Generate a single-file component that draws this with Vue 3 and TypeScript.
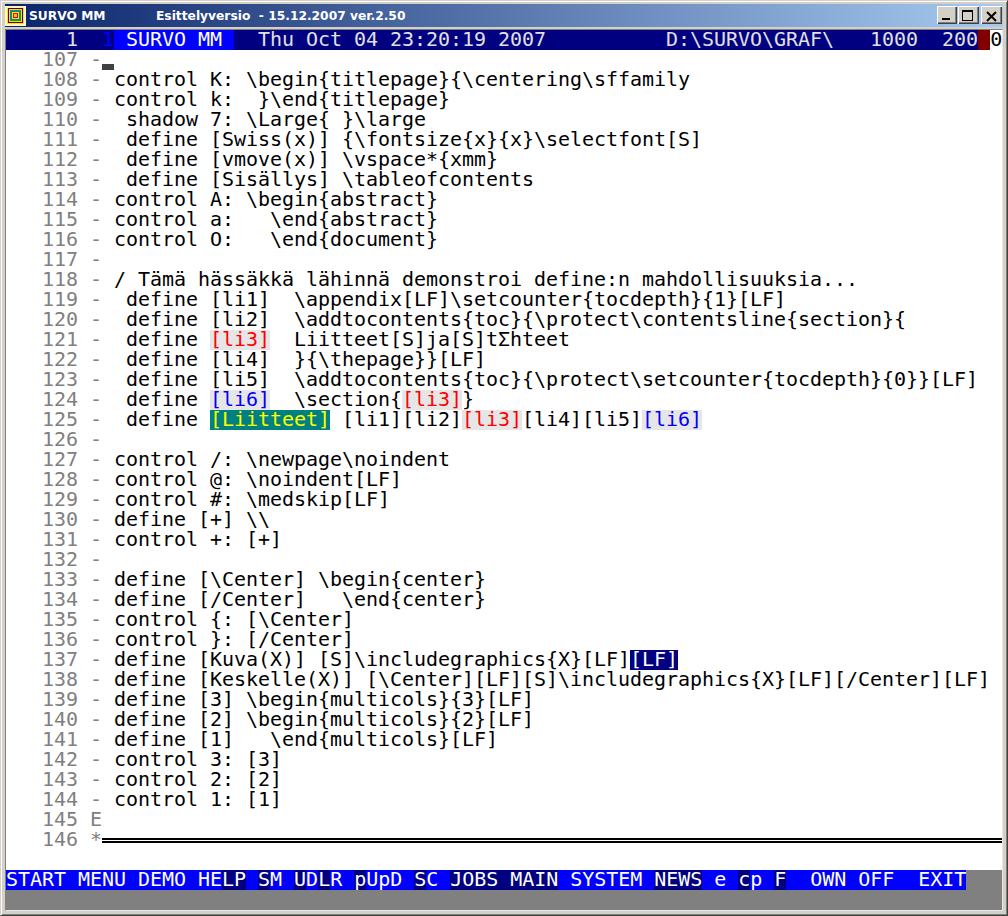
<script setup lang="ts">
type Seg = { t: string; c?: string };
type Row = { n: number; m: string; segs: Seg[] };

const raw: [number, string, string | Seg[]][] = [
  [108, '-', 'control K: \\begin{titlepage}{\\centering\\sffamily'],
  [109, '-', 'control k:  }\\end{titlepage}'],
  [110, '-', ' shadow 7: \\Large{ }\\large'],
  [111, '-', ' define [Swiss(x)] {\\fontsize{x}{x}\\selectfont[S]'],
  [112, '-', ' define [vmove(x)] \\vspace*{xmm}'],
  [113, '-', ' define [Sisällys] \\tableofcontents'],
  [114, '-', 'control A: \\begin{abstract}'],
  [115, '-', 'control a:   \\end{abstract}'],
  [116, '-', 'control O:   \\end{document}'],
  [117, '-', ''],
  [118, '-', '/ Tämä hässäkkä lähinnä demonstroi define:n mahdollisuuksia...'],
  [119, '-', ' define [li1]  \\appendix[LF]\\setcounter{tocdepth}{1}[LF]'],
  [120, '-', ' define [li2]  \\addtocontents{toc}{\\protect\\contentsline{section}{'],
  [121, '-', [{ t: ' define ' }, { t: '[li3]', c: 'red' }, { t: '  Liitteet[S]ja[S]tΣhteet' }]],
  [122, '-', ' define [li4]  }{\\thepage}}[LF]'],
  [123, '-', ' define [li5]  \\addtocontents{toc}{\\protect\\setcounter{tocdepth}{0}}[LF]'],
  [124, '-', [{ t: ' define ' }, { t: '[li6]', c: 'blue' }, { t: '  \\section{' }, { t: '[li3]', c: 'red' }, { t: '}' }]],
  [125, '-', [{ t: ' define ' }, { t: '[Liitteet]', c: 'teal' }, { t: ' [li1][li2]' }, { t: '[li3]', c: 'red' }, { t: '[li4][li5]' }, { t: '[li6]', c: 'blue' }]],
  [126, '-', ''],
  [127, '-', 'control /: \\newpage\\noindent'],
  [128, '-', 'control @: \\noindent[LF]'],
  [129, '-', 'control #: \\medskip[LF]'],
  [130, '-', 'define [+] \\\\'],
  [131, '-', 'control +: [+]'],
  [132, '-', ''],
  [133, '-', 'define [\\Center] \\begin{center}'],
  [134, '-', 'define [/Center]   \\end{center}'],
  [135, '-', 'control {: [\\Center]'],
  [136, '-', 'control }: [/Center]'],
  [137, '-', [{ t: 'define [Kuva(X)] [S]\\includegraphics{X}[LF]' }, { t: '[LF]', c: 'navy' }]],
  [138, '-', 'define [Keskelle(X)] [\\Center][LF][S]\\includegraphics{X}[LF][/Center][LF]'],
  [139, '-', 'define [3] \\begin{multicols}{3}[LF]'],
  [140, '-', 'define [2] \\begin{multicols}{2}[LF]'],
  [141, '-', 'define [1]   \\end{multicols}[LF]'],
  [142, '-', 'control 3: [3]'],
  [143, '-', 'control 2: [2]'],
  [144, '-', 'control 1: [1]'],
  [145, 'E', ''],
];

const rows: Row[] = raw.map(([n, m, s]) => ({
  n,
  m,
  segs: typeof s === 'string' ? [{ t: s }] : s,
}));

const status: Seg[] = [
  { t: '     1  ', c: 'st-a' },
  { t: '1', c: 'st-b' },
  { t: ' SURVO MM ', c: 'st-c' },
  { t: '  Thu Oct 04 23:20:19 2007          D:\\SURVO\\GRAF\\   1000  200', c: 'st-a' },
  { t: ' ', c: 'st-d' },
  { t: '0', c: 'st-e' },
];

// Runs of the bottom key line; "k-d" marks the darker key cells.
const menu: Seg[] = [
  { t: 'START MENU DEMO HE', c: 'k' },
  { t: 'LP', c: 'k-d' },
  { t: ' ', c: 'k' },
  { t: 'S', c: 'k-d' },
  { t: 'M ', c: 'k' },
  { t: 'U', c: 'k-d' },
  { t: 'D', c: 'k' },
  { t: 'L', c: 'k-d' },
  { t: 'R ', c: 'k' },
  { t: 'p', c: 'k-d' },
  { t: 'UpD ', c: 'k' },
  { t: 'S', c: 'k-d' },
  { t: 'C ', c: 'k' },
  { t: 'JOBS MAIN', c: 'k-d' },
  { t: ' SYSTEM ', c: 'k' },
  { t: 'NEWS', c: 'k-d' },
  { t: ' e ', c: 'k' },
  { t: 'c', c: 'k-d' },
  { t: 'p ', c: 'k' },
  { t: 'F', c: 'k-d' },
  { t: '  OWN OFF  EXIT', c: 'k' },
];

const appTag = 'Esittelyversio  - 15.12.2007 ver.2.50';
</script>

<template>
  <div class="window">
    <header class="titlebar">
      <svg class="appicon" width="21" height="20" viewBox="0 0 21 20">
        <rect width="21" height="20" fill="#fff6c8" />
        <rect x="2" y="2" width="17" height="16" fill="#ffe000" />
        <rect x="3" y="2" width="15" height="15" fill="#600000" />
        <rect x="4" y="3" width="13" height="13" fill="#ffe000" />
        <rect x="5" y="4" width="11" height="11" fill="#0a9a4a" />
        <rect x="6" y="5" width="9" height="9" fill="#1080c0" />
        <rect x="7" y="6" width="7" height="7" fill="#ffe000" />
        <rect x="8" y="7" width="5" height="5" fill="#f00000" />
        <rect x="9" y="8" width="3" height="3" fill="#ffd000" />
      </svg>
      <span class="appname">SURVO MM</span>
      <span class="apptag">{{ appTag }}</span>
      <div class="controls">
        <button class="ctl" aria-label="Minimize">
          <svg width="20" height="18" viewBox="0 0 20 18"><rect x="5" y="12" width="8" height="2" fill="#000" /></svg>
        </button>
        <button class="ctl wide" aria-label="Maximize">
          <svg width="21" height="18" viewBox="0 0 21 18"><path d="M4 4h11v11H4z M5 6v8h9V6z" fill="#000" fill-rule="evenodd" /></svg>
        </button>
        <button class="ctl wide gap" aria-label="Close">
          <svg width="21" height="18" viewBox="0 0 21 18"><path d="M6 6l9 9M15 6l-9 9" stroke="#000" stroke-width="2" fill="none" /></svg>
        </button>
      </div>
    </header>

    <main class="screen">
      <div class="status"><span v-for="(s, i) in status" :key="i" :class="s.c">{{ s.t }}</span></div>

      <div class="line">
        <span class="num">107</span><span class="mark">-</span><span class="cursor"></span>
      </div>
      <div v-for="r in rows" :key="r.n" class="line">
        <span class="num">{{ r.n }}</span><span class="mark">{{ r.m }}</span><span class="body"><span v-for="(s, i) in r.segs" :key="i" class="seg" :class="s.c">{{ s.t }}</span></span>
      </div>
      <div class="line">
        <span class="num">146</span><span class="mark">*</span><span class="rule"></span>
      </div>
      <div class="line"></div>

      <div class="keys"><span v-for="(s, i) in menu" :key="i" :class="s.c">{{ s.t }}</span></div>
      <div class="pad"></div>
    </main>
  </div>
</template>

<style>
html, body { margin: 0; background: #d4d0c8; }
</style>

<style scoped>
.window {
  width: 1008px;
  height: 916px;
  box-sizing: border-box;
  display: flex;
  flex-direction: column;
  background: #d4d0c8;
  border-top: 1px solid #d4d0c8;
  border-left: 1px solid #d4d0c8;
  border-right: 1px solid #404040;
  border-bottom: 1px solid #404040;
  box-shadow: inset 1px 1px 0 #fff, inset -1px -1px 0 #808080;
  padding: 3px 4px 4px;
}
.titlebar {
  height: 23px;
  flex: none;
  display: flex;
  align-items: center;
  background: linear-gradient(90deg, #0a246a, #a6caf0);
  color: #fff;
  font: bold 12.25px/18px "DejaVu Sans", sans-serif;
  padding: 0 1px 0 0;
}
.appicon { flex: none; margin-right: 3px; }
.appname { width: 127px; flex: none; white-space: pre; }
.apptag { white-space: pre; }
.controls { margin-left: auto; display: flex; margin-bottom: 1px; }
.ctl {
  width: 20px;
  height: 18px;
  padding: 0;
  display: flex;
  align-items: center;
  justify-content: center;
  background: #d4d0c8;
  border: 0;
  box-shadow: inset 1px 1px 0 #fff, inset -1px -1px 0 #404040, inset -2px -2px 0 #808080;
}
.wide { width: 21px; margin-left: 1px; }
.gap { margin-left: 2px; }
.screen {
  flex: 1;
  min-height: 0;
  display: flex;
  flex-direction: column;
  margin-top: 2px;
  background: #fff;
  font: 20px/18px "DejaVu Sans Mono", monospace;
  letter-spacing: -0.04px;
  white-space: pre;
  border-top: 1px solid #808080;
  border-left: 1px solid #808080;
  border-right: 1px solid #e8e8e8;
  border-bottom: 1px solid #e8e8e8;
}
.status {
  height: 20px;
  flex: none;
  display: flex;
  background: #000080;
}
.st-a { color: #e0e0e0; }
.st-b { color: #0000ff; }
.st-c { background: #0000ff; color: #fff; }
.st-d { background: #800000; width: 12px; }
.st-e { background: #fff; color: #000; flex: 1; }
.line {
  height: 20px;
  flex: none;
  display: flex;
  color: #000;
}
.num {
  width: 36px;
  margin-left: 36px;
  color: #808080;
  flex: none;
}
.mark {
  width: 12px;
  margin-left: 12px;
  flex: none;
  color: #808080;
}
.body { margin-left: 12px; display: flex; }
.seg { height: 20px; }
.red { background: #e6e6e6; color: #ff0000; }
.blue { background: #e6e6e6; color: #0000ff; }
.teal { background: #008080; color: #ffff00; }
.navy { background: #000080; color: #fff; }
.cursor {
  width: 12px;
  height: 6px;
  margin-top: 14px;
  background: #404040;
}
.rule {
  flex: 1;
  height: 5px;
  margin-top: 8px;
  border-top: 2px solid #000;
  border-bottom: 2px solid #000;
  box-sizing: border-box;
}
.keys {
  height: 20px;
  flex: none;
  display: flex;
  background: #808080;
  color: #fff;
}
.k { background: #0000ff; }
.k-d { background: #000080; }
.pad { flex: 1; background: #808080; }
</style>
